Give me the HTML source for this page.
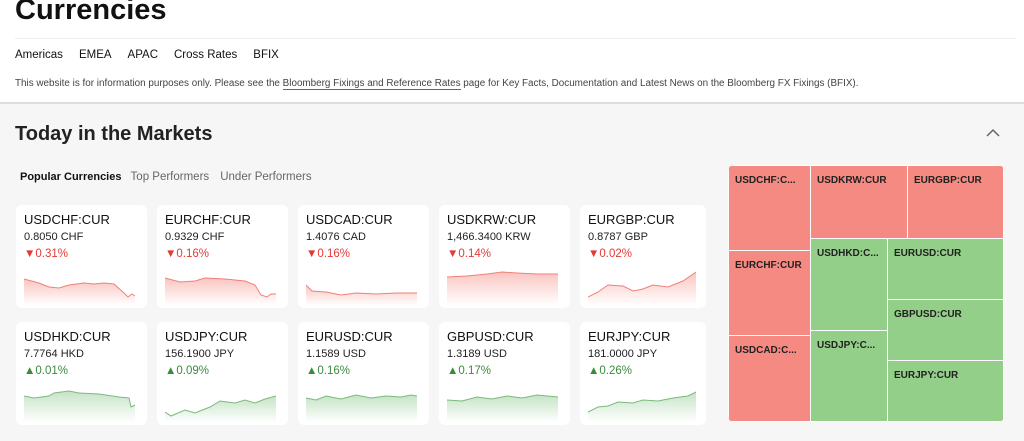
<!DOCTYPE html>
<html><head><meta charset="utf-8"><style>
*{margin:0;padding:0;box-sizing:border-box}
body{width:1024px;height:441px;overflow:hidden;font-family:"Liberation Sans",sans-serif;background:#f6f6f6;position:relative;color:#111}
.top{position:absolute;left:0;top:0;width:1024px;height:104px;background:#fff;border-bottom:2px solid #ddd}
h1{position:absolute;left:15px;top:-6px;font-size:29px;font-weight:bold}
.hr{position:absolute;left:15px;right:8px;top:38px;border-top:1px solid #eee}
.nav{position:absolute;top:49px;left:15px;font-size:11.5px;color:#111}
.nav span{margin-right:16px}
.info{position:absolute;top:78px;left:15px;font-size:9.9px;color:#444;white-space:nowrap}
.info u{text-decoration:none;border-bottom:1px solid #666}
h2{position:absolute;left:15px;top:123px;font-size:20px;font-weight:bold;color:#222}
.chev{position:absolute;left:986px;top:128px}
.tabs{position:absolute;top:171px;left:20px;font-size:11px;color:#666}
.tabs b{color:#111;margin-right:6px}.tabs span{margin-right:8px;font-size:11.5px}
.card{position:absolute;width:131px;height:103px;background:#fff;border-radius:6px}
.card .n{position:absolute;left:8px;top:7px;font-size:13px;color:#111}
.card .p{position:absolute;left:8px;top:26px;font-size:11px;color:#222}
.card .c{position:absolute;left:8px;top:43px;font-size:11.5px}
.dn{color:#e53935}.up{color:#3c8a3c}
.card svg{position:absolute;left:8px;top:66px}
.tm{position:absolute;left:728px;top:165px;width:276px;height:257px;border-radius:6px;overflow:hidden}
.t{position:absolute;border:1px solid #fff;font-size:10px;font-weight:bold;color:#222;padding:9px 0 0 6px;white-space:nowrap}
.r{background:#f58a82}.g{background:#93cf88}
</style></head><body>
<div class="top">
<h1>Currencies</h1><div class="hr"></div>
<div class="nav"><span>Americas</span><span>EMEA</span><span>APAC</span><span>Cross Rates</span><span>BFIX</span></div>
<div class="info">This website is for information purposes only. Please see the <u>Bloomberg Fixings and Reference Rates</u> page for Key Facts, Documentation and Latest News on the Bloomberg FX Fixings (BFIX).</div>
</div>
<h2>Today in the Markets</h2>
<svg class="chev" width="14" height="10"><path d="M1 8 L7 2 L13 8" fill="none" stroke="#666" stroke-width="1.5"/></svg>
<div class="tabs"><b>Popular Currencies</b> <span>Top Performers</span> <span>Under Performers</span></div>
<svg width="0" height="0" style="position:absolute"><defs>
<linearGradient id="gr" x1="0" y1="0" x2="0" y2="1"><stop offset="0" stop-color="#f58a82" stop-opacity=".5"/><stop offset="1" stop-color="#f58a82" stop-opacity="0"/></linearGradient>
<linearGradient id="gg" x1="0" y1="0" x2="0" y2="1"><stop offset="0" stop-color="#8cc78c" stop-opacity=".5"/><stop offset="1" stop-color="#8cc78c" stop-opacity="0"/></linearGradient></defs></svg>

<div class="card" style="left:16px;top:205px"><div class="n">USDCHF:CUR</div><div class="p">0.8050 CHF</div><div class="c dn">▼0.31%</div>
<svg width="112" height="34"><path d="M0 8 L15 12 L25 16 L35 17 L45 14 L60 12 L70 13 L80 12 L90 13 L100 22 L104 26 L108 23 L111 25 L111 34 L0 34Z" fill="url(#gr)"/><path d="M0 8 L15 12 L25 16 L35 17 L45 14 L60 12 L70 13 L80 12 L90 13 L100 22 L104 26 L108 23 L111 25" fill="none" stroke="#f08078"/></svg></div>
<div class="card" style="left:157px;top:205px"><div class="n">EURCHF:CUR</div><div class="p">0.9329 CHF</div><div class="c dn">▼0.16%</div>
<svg width="112" height="34"><path d="M0 7 L15 11 L30 10 L40 7 L60 8 L80 10 L90 14 L96 24 L102 26 L106 23 L111 23 L111 34 L0 34Z" fill="url(#gr)"/><path d="M0 7 L15 11 L30 10 L40 7 L60 8 L80 10 L90 14 L96 24 L102 26 L106 23 L111 23" fill="none" stroke="#f08078"/></svg></div>
<div class="card" style="left:298px;top:205px"><div class="n">USDCAD:CUR</div><div class="p">1.4076 CAD</div><div class="c dn">▼0.16%</div>
<svg width="112" height="34"><path d="M0 14 L6 20 L20 21 L35 24 L50 22 L70 23 L90 22 L111 22 L111 34 L0 34Z" fill="url(#gr)"/><path d="M0 14 L6 20 L20 21 L35 24 L50 22 L70 23 L90 22 L111 22" fill="none" stroke="#f08078"/></svg></div>
<div class="card" style="left:439px;top:205px"><div class="n">USDKRW:CUR</div><div class="p">1,466.3400 KRW</div><div class="c dn">▼0.14%</div>
<svg width="112" height="34"><path d="M0 6 L20 5 L40 3 L55 1 L70 2 L90 3 L111 3 L111 34 L0 34Z" fill="url(#gr)"/><path d="M0 6 L20 5 L40 3 L55 1 L70 2 L90 3 L111 3" fill="none" stroke="#f08078"/></svg></div>
<div class="card" style="left:580px;top:205px;width:126px"><div class="n">EURGBP:CUR</div><div class="p">0.8787 GBP</div><div class="c dn">▼0.02%</div>
<svg width="112" height="34"><path d="M0 26 L10 21 L20 14 L35 15 L45 20 L55 18 L65 14 L80 16 L95 10 L108 1 L108 34 L0 34Z" fill="url(#gr)"/><path d="M0 26 L10 21 L20 14 L35 15 L45 20 L55 18 L65 14 L80 16 L95 10 L108 1" fill="none" stroke="#f08078"/></svg></div>

<div class="card" style="left:16px;top:322px"><div class="n">USDHKD:CUR</div><div class="p">7.7764 HKD</div><div class="c up">▲0.01%</div>
<svg width="112" height="34"><path d="M0 8 L10 10 L25 8 L30 5 L45 3 L55 5 L75 6 L95 9 L105 10 L107 19 L111 17 L111 34 L0 34Z" fill="url(#gg)"/><path d="M0 8 L10 10 L25 8 L30 5 L45 3 L55 5 L75 6 L95 9 L105 10 L107 19 L111 17" fill="none" stroke="#7cba7c"/></svg></div>
<div class="card" style="left:157px;top:322px"><div class="n">USDJPY:CUR</div><div class="p">156.1900 JPY</div><div class="c up">▲0.09%</div>
<svg width="112" height="34"><path d="M0 24 L6 28 L20 22 L30 25 L45 19 L55 13 L70 15 L80 12 L90 15 L100 11 L111 8 L111 34 L0 34Z" fill="url(#gg)"/><path d="M0 24 L6 28 L20 22 L30 25 L45 19 L55 13 L70 15 L80 12 L90 15 L100 11 L111 8" fill="none" stroke="#7cba7c"/></svg></div>
<div class="card" style="left:298px;top:322px"><div class="n">EURUSD:CUR</div><div class="p">1.1589 USD</div><div class="c up">▲0.16%</div>
<svg width="112" height="34"><path d="M0 10 L10 12 L20 8 L35 11 L50 7 L65 10 L80 8 L95 9 L105 7 L111 8 L111 34 L0 34Z" fill="url(#gg)"/><path d="M0 10 L10 12 L20 8 L35 11 L50 7 L65 10 L80 8 L95 9 L105 7 L111 8" fill="none" stroke="#7cba7c"/></svg></div>
<div class="card" style="left:439px;top:322px"><div class="n">GBPUSD:CUR</div><div class="p">1.3189 USD</div><div class="c up">▲0.17%</div>
<svg width="112" height="34"><path d="M0 12 L15 13 L30 9 L45 11 L60 8 L75 10 L90 7 L111 9 L111 34 L0 34Z" fill="url(#gg)"/><path d="M0 12 L15 13 L30 9 L45 11 L60 8 L75 10 L90 7 L111 9" fill="none" stroke="#7cba7c"/></svg></div>
<div class="card" style="left:580px;top:322px;width:126px"><div class="n">EURJPY:CUR</div><div class="p">181.0000 JPY</div><div class="c up">▲0.26%</div>
<svg width="112" height="34"><path d="M0 24 L10 19 L20 18 L30 14 L45 15 L55 12 L70 13 L85 10 L100 8 L108 4 L108 34 L0 34Z" fill="url(#gg)"/><path d="M0 24 L10 19 L20 18 L30 14 L45 15 L55 12 L70 13 L85 10 L100 8 L108 4" fill="none" stroke="#7cba7c"/></svg></div>

<div class="tm">
<div class="t r" style="left:0;top:0;width:83px;height:86px">USDCHF:C...</div>
<div class="t r" style="left:0;top:85px;width:83px;height:86px">EURCHF:CUR</div>
<div class="t r" style="left:0;top:170px;width:83px;height:87px">USDCAD:C...</div>
<div class="t r" style="left:82px;top:0;width:98px;height:74px">USDKRW:CUR</div>
<div class="t r" style="left:179px;top:0;width:97px;height:74px">EURGBP:CUR</div>
<div class="t g" style="left:82px;top:73px;width:78px;height:93px">USDHKD:C...</div>
<div class="t g" style="left:82px;top:165px;width:78px;height:92px">USDJPY:C...</div>
<div class="t g" style="left:159px;top:73px;width:117px;height:62px">EURUSD:CUR</div>
<div class="t g" style="left:159px;top:134px;width:117px;height:62px">GBPUSD:CUR</div>
<div class="t g" style="left:159px;top:195px;width:117px;height:62px">EURJPY:CUR</div>
</div>
</body></html>
